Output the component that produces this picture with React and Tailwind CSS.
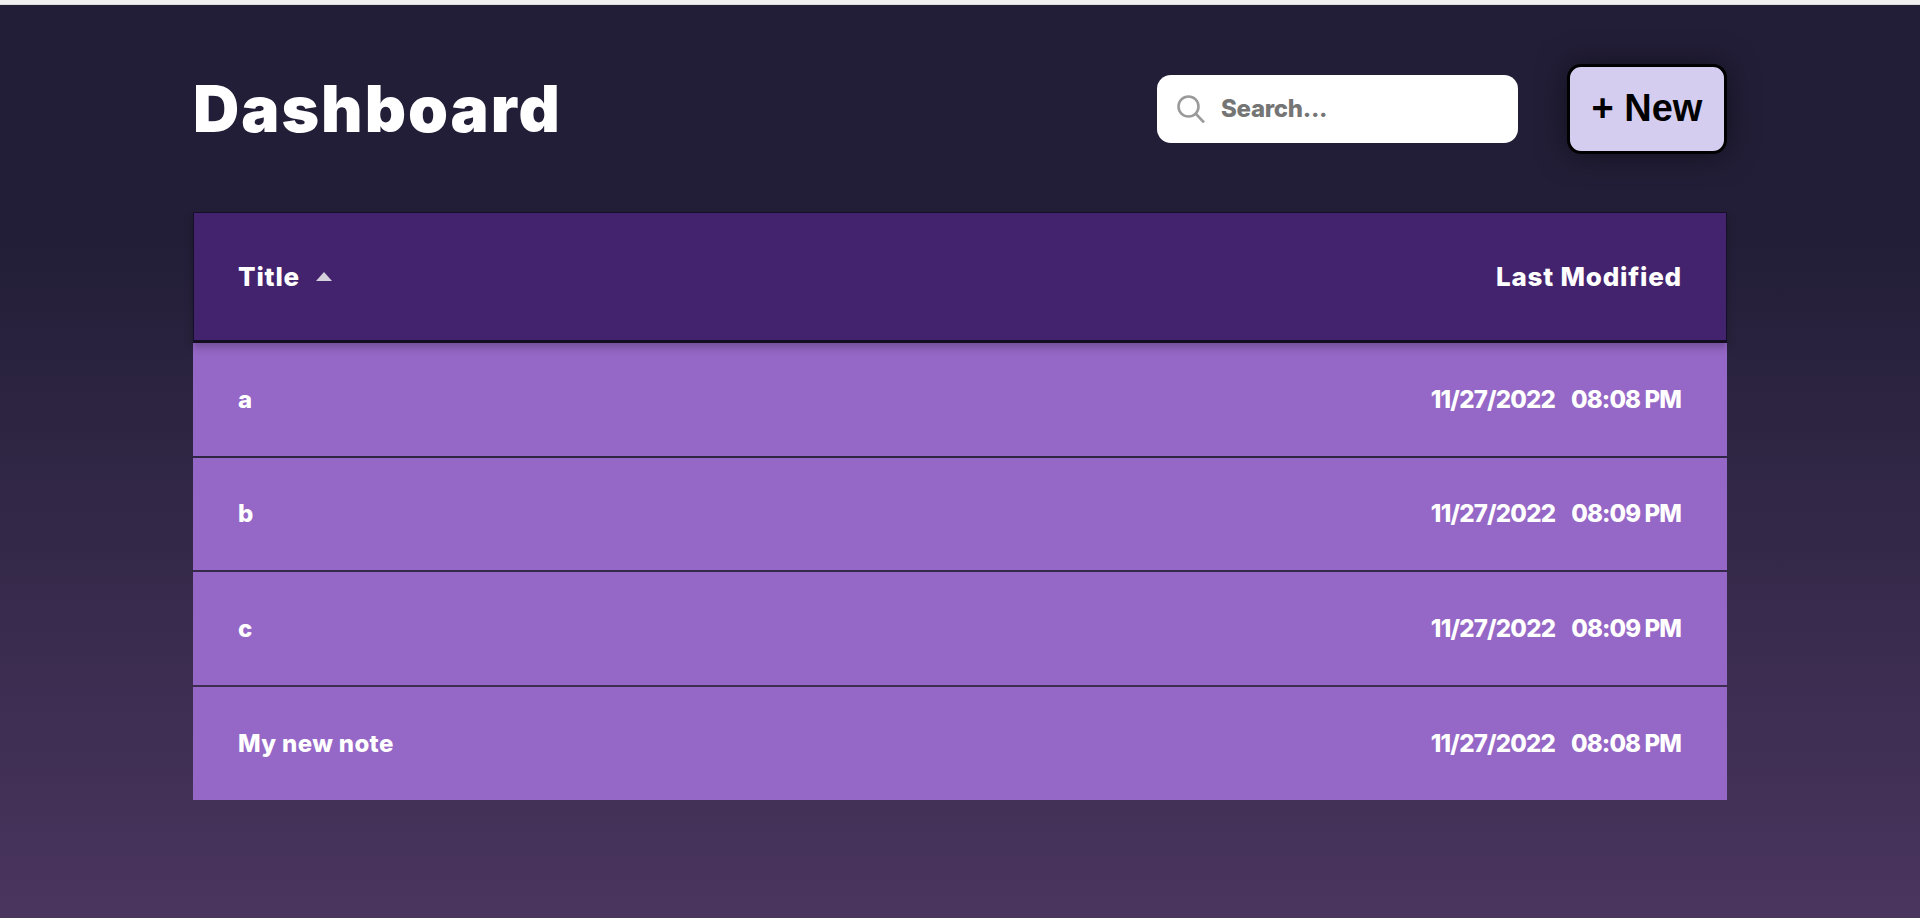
const notes = [
    { title: 'a', date: '11/27/2022', time: '08:08 PM', height: 'h-[113px]' },
    { title: 'b', date: '11/27/2022', time: '08:09 PM', height: 'h-[112px]' },
    { title: 'c', date: '11/27/2022', time: '08:09 PM', height: 'h-[113px]' },
    { title: 'My new note', date: '11/27/2022', time: '08:08 PM', height: 'h-[113px]' },
];

export default function App() {
    return (
        <div className="h-[918px] overflow-hidden font-['Inter',sans-serif] text-white">
            <div className="h-[5px] bg-[#f0f0f0] border-b border-[#dcdcdc]" />
            <div className="h-[913px] bg-[linear-gradient(#231e38_0%,#221e37_25%,#4a355f_100%)]">
                <div className="w-[1534px] mx-auto">
                    {/* Header */}
                    <div className="flex items-center justify-between h-[207px]">
                        <h1 className="text-[64px] font-black tracking-[2px] leading-none">Dashboard</h1>
                        <div className="flex items-center gap-[49px]">
                            <div className="flex items-center gap-[16px] w-[361px] h-[68px] pl-[20px] bg-white rounded-[14px]">
                                <svg width="28" height="28" viewBox="0 0 28 28" fill="none" stroke="#9a9a9a" strokeWidth="2.6">
                                    <circle cx="11.5" cy="11.5" r="10" />
                                    <path d="M19 19 L27 27.5" />
                                </svg>
                                <span className="text-[24px] font-extrabold tracking-[-0.3px] text-[#757575]">Search...</span>
                            </div>
                            <button className="w-[160px] h-[90px] bg-[#d5cdf0] border-[3px] border-black rounded-[14px] text-black text-[38px] font-bold font-['Liberation_Sans',sans-serif] shadow-[0_0_30px_rgba(0,0,0,0.5)]">
                                + New
                            </button>
                        </div>
                    </div>

                    {/* Table */}
                    <div className="flex flex-col gap-[2px]">
                        <div className="flex items-center justify-between h-[131px] px-[44px] bg-[#44236e] border border-[#15102a] border-b-[3px] border-b-[#120e20] text-[26px] font-extrabold tracking-[0.8px] shadow-[0_4px_8px_rgba(0,0,0,0.25)] relative -mb-[2px]">
                            <div className="flex items-center gap-[16px]">
                                <span>Title</span>
                                <span className="w-0 h-0 border-x-[8px] border-x-transparent border-b-[9px] border-b-[#d4d0dc]" />
                            </div>
                            <span>Last Modified</span>
                        </div>
                        {notes.map((note) => (
                            <div
                                key={note.title}
                                className={`flex items-center justify-between pl-[45px] pr-[46px] bg-[#9567c6] text-[24px] font-extrabold ${note.height}`}
                            >
                                <span className="tracking-[0.35px]">{note.title}</span>
                                <span className="flex gap-[16px]">
                                    <span className="tracking-[-0.8px]">{note.date}</span>
                                    <span className="tracking-[-0.9px]">{note.time}</span>
                                </span>
                            </div>
                        ))}
                    </div>
                </div>
            </div>
        </div>
    );
}
